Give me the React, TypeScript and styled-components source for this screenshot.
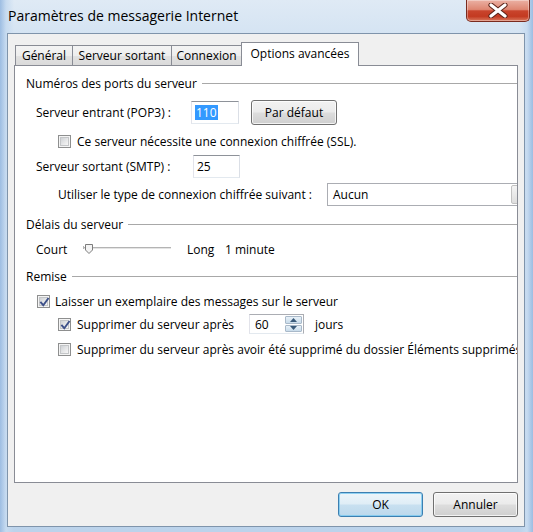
import React from "react";
import styled, { createGlobalStyle } from "styled-components";

const Global = createGlobalStyle`
  html, body { margin: 0; padding: 0; }
  body {
    width: 533px; height: 532px; overflow: hidden;
    font-family: "Open Sans", "Noto Sans", sans-serif;
    font-size: 12px; color: #000;
  }
`;

const Window = styled.div`
  width: 533px; height: 532px; box-sizing: border-box;
  display: flex; flex-direction: column;
  background:
    linear-gradient(90deg, #9dbde2 0px, #c7dbf0 6px, rgba(200,220,240,0) 14px, rgba(200,220,240,0) 519px, #c7dbf0 527px, #9dbde2 533px),
    linear-gradient(180deg, #dfeaf5 0%, #d2e2f2 8%, #c3d7ed 40%, #bcd3eb 100%);
`;

const TitleBar = styled.div`
  height: 33px; flex: none;
  display: flex; justify-content: space-between; align-items: flex-start;
  padding-left: 8px; padding-right: 3px;
`;

const Title = styled.div`
  font-size: 14px; line-height: 20px; margin-top: 6px;
  color: #000;
`;

const CloseButton = styled.div`
  width: 64px; height: 22px; box-sizing: border-box;
  border: 1px solid #7a2b1f; border-top: none;
  border-radius: 0 0 5px 5px;
  background: linear-gradient(180deg, #ebb1a4 0%, #de8672 45%, #c9442c 52%, #c33a21 78%, #d9785d 100%);
  box-shadow: inset 0 0 0 1px rgba(255,255,255,0.35);
  display: flex; align-items: center; justify-content: center;
`;

const Client = styled.div`
  flex: 1;
  margin: 0 8px 5px 7px;
  border: 1px solid #7f94ab;
  background: #f0f0f0;
  padding: 8px 6px 9px 6px;
  display: flex; flex-direction: column;
  min-height: 0;
`;

const TabStrip = styled.div`
  height: 23px; flex: none;
  display: flex; align-items: flex-end;
  padding-left: 1px;
`;

const Tab = styled.div<{ $w: number; $active?: boolean; $first?: boolean }>`
  width: ${(p) => p.$w}px; box-sizing: border-box;
  height: ${(p) => (p.$active ? 24 : 20)}px;
  margin-left: ${(p) => (p.$first ? 0 : -1)}px;
  margin-bottom: ${(p) => (p.$active ? -1 : 0)}px;
  border: 1px solid #898c95; border-bottom: none;
  background: ${(p) =>
    p.$active ? "#ffffff" : "linear-gradient(180deg, #f4f4f4 0%, #eeeeee 50%, #e2e2e2 51%, #dadada 100%)"};
  position: relative; z-index: ${(p) => (p.$active ? 2 : 1)};
  display: flex; align-items: center; justify-content: center;
  padding-bottom: ${(p) => (p.$active ? 3 : 0)}px;
  font-size: 12px; white-space: nowrap;
`;

const Panel = styled.div`
  flex: 1; min-height: 0;
  background: #fff;
  border: 1px solid #898c95;
  padding: 9px 0 0 11px;
  overflow: hidden;
  display: flex; flex-direction: column;
`;

const GroupHeader = styled.div<{ $mt: number }>`
  height: 16px; margin-top: ${(p) => p.$mt}px;
  display: flex; align-items: center; gap: 5px;
  white-space: nowrap; flex: none;
`;

const GroupLine = styled.div`
  flex: 1; height: 1px; background: #a8a8a8;
`;

const Row = styled.div<{ $mt: number; $h: number; $indent: number }>`
  height: ${(p) => p.$h}px; margin-top: ${(p) => p.$mt}px;
  padding-left: ${(p) => p.$indent}px;
  display: flex; align-items: center;
  white-space: nowrap; flex: none;
`;

const Label = styled.span<{ $w?: number }>`
  display: inline-block; flex: none;
  ${(p) => (p.$w ? `width: ${p.$w}px;` : "")}
`;

const TextBox = styled.div<{ $w: number }>`
  width: ${(p) => p.$w}px; height: 23px; box-sizing: border-box; flex: none;
  border: 1px solid #abadb3; border-top-color: #8e9299;
  border-left-color: #e2e3ea; border-right-color: #dbdfe6; border-bottom-color: #e3e9ef;
  background: #fff;
  display: flex; align-items: center; padding-left: 3px;
`;

const Selected = styled.span`
  background: #3399ff; color: #fff; padding: 0 1px; line-height: 15px;
`;

const PushButton = styled.div<{ $w: number; $default?: boolean }>`
  width: ${(p) => p.$w}px; height: 25px; box-sizing: border-box; flex: none;
  border: 1px solid ${(p) => (p.$default ? "#3c7fb1" : "#707070")};
  border-radius: 3px;
  background: ${(p) =>
    p.$default
      ? "linear-gradient(180deg, #edf5fa 0%, #dfedf6 48%, #c8e0f0 52%, #bcd8ec 100%)"
      : "linear-gradient(180deg, #f2f2f2 0%, #ebebeb 48%, #dddddd 52%, #cfcfcf 100%)"};
  box-shadow: inset 0 0 0 1px ${(p) => (p.$default ? "rgba(120,200,240,0.8)" : "rgba(255,255,255,0.75)")};
  display: flex; align-items: center; justify-content: center;
  font-size: 12px;
`;

const Spacer = styled.span<{ $w: number }>`
  display: inline-block; width: ${(p) => p.$w}px; flex: none;
`;

const Select = styled.div`
  width: 203px; height: 23px; box-sizing: border-box; flex: none;
  border: 1px solid #abadb3; background: #fff;
  display: flex; align-items: center; justify-content: space-between;
  padding-left: 5px; padding-right: 1px;
`;

const DropButton = styled.div`
  width: 17px; height: 19px; box-sizing: border-box;
  border: 1px solid #c2c2c2; border-radius: 2px;
  background: linear-gradient(180deg, #f4f4f4, #dedede);
`;

const CheckBoxBox = styled.span`
  width: 13px; height: 13px; box-sizing: border-box; flex: none;
  border: 1px solid #8e8f8f; background: #f4f4f4;
  display: inline-flex; align-items: center; justify-content: center;
  position: relative;
`;

const CheckInner = styled.span`
  width: 9px; height: 9px; box-sizing: border-box;
  border: 1px solid #c4c6c8;
  background: linear-gradient(135deg, #cfd2d6 0%, #e6e7e8 55%, #f6f6f6 100%);
`;

const CheckMark = styled.svg`
  position: absolute; left: 0; top: 0;
`;

const CheckGap = styled.span<{ $w: number }>`
  display: inline-block; width: ${(p) => p.$w}px; flex: none;
`;

const Spinner = styled.div`
  width: 55px; height: 20px; box-sizing: border-box; flex: none;
  border: 1px solid #abadb3; border-left-color: #e2e3ea; border-bottom-color: #e3e9ef;
  background: #fff;
  display: flex; align-items: center; justify-content: space-between;
  padding-left: 5px; padding-right: 1px;
`;

const SpinButtons = styled.div`
  width: 17px; height: 16px;
  display: flex; flex-direction: column; gap: 1px;
`;

const SpinHalf = styled.div`
  flex: 1; box-sizing: border-box;
  border: 1px solid #a9b9c9; border-radius: 1px;
  background: linear-gradient(180deg, #e8f1f8, #c8dbea);
  display: flex; align-items: center; justify-content: center;
`;

const ButtonRow = styled.div`
  flex: none; height: 25px; margin-top: 9px;
  display: flex; justify-content: flex-end; gap: 10px;
`;

function CheckBox({ checked }: { checked?: boolean }) {
  return (
    <CheckBoxBox>
      <CheckInner />
      {checked && (
        <CheckMark width="13" height="13" viewBox="0 0 13 13">
          <path d="M3 6.5 L5.3 9.2 L10 2.8" fill="none" stroke="#3d5089" strokeWidth="1.9" strokeLinecap="square" />
        </CheckMark>
      )}
    </CheckBoxBox>
  );
}

function Slider() {
  return (
    <svg width="90" height="12" viewBox="0 0 90 12" style={{ flex: "none" }}>
      <rect x="0" y="4" width="88" height="1" fill="#b4b4b4" />
      <rect x="0" y="5" width="88" height="1" fill="#e4e4e4" />
      <rect x="0" y="3" width="1" height="3" fill="#b4b4b4" />
      <path d="M2.5 1.5 H9.5 V7 L6 10.5 L2.5 7 Z" fill="#f4f4f4" stroke="#7c7c7c" strokeWidth="1" />
    </svg>
  );
}

export default function App() {
  return (
    <>
      <Global />
      <Window>
        <TitleBar>
          <Title>Paramètres de messagerie Internet</Title>
          <CloseButton>
            <svg width="20" height="15" viewBox="0 0 20 15">
              <path d="M3 2 L17 13 M17 2 L3 13" stroke="#5a2218" strokeWidth="5.2" strokeLinecap="round" />
              <path d="M3 2 L17 13 M17 2 L3 13" stroke="#ffffff" strokeWidth="3.2" strokeLinecap="round" />
            </svg>
          </CloseButton>
        </TitleBar>
        <Client>
          <TabStrip>
            <Tab $w={58} $first>Général</Tab>
            <Tab $w={100}>Serveur sortant</Tab>
            <Tab $w={71}>Connexion</Tab>
            <Tab $w={118} $active>Options avancées</Tab>
          </TabStrip>
          <Panel>
            <GroupHeader $mt={0}>
              <span>Numéros des ports du serveur</span>
              <GroupLine />
            </GroupHeader>
            <Row $mt={9} $h={25} $indent={10}>
              <Label $w={155}>Serveur entrant (POP3) :</Label>
              <TextBox $w={48}><Selected>110</Selected></TextBox>
              <Spacer $w={12} />
              <PushButton $w={86}>Par défaut</PushButton>
            </Row>
            <Row $mt={8} $h={16} $indent={32}>
              <CheckBox />
              <CheckGap $w={6} />
              <Label>Ce serveur nécessite une connexion chiffrée (SSL).</Label>
            </Row>
            <Row $mt={6} $h={23} $indent={10}>
              <Label $w={157}>Serveur sortant (SMTP) :</Label>
              <TextBox $w={47}>25</TextBox>
            </Row>
            <Row $mt={5} $h={23} $indent={32}>
              <Label $w={269}>Utiliser le type de connexion chiffrée suivant :</Label>
              <Select>
                <span>Aucun</span>
                <DropButton />
              </Select>
            </Row>
            <GroupHeader $mt={10}>
              <span>Délais du serveur</span>
              <GroupLine />
            </GroupHeader>
            <Row $mt={9} $h={16} $indent={10}>
              <Label $w={47}>Court</Label>
              <Slider />
              <Spacer $w={14} />
              <Label $w={38}>Long</Label>
              <Label>1 minute</Label>
            </Row>
            <GroupHeader $mt={11}>
              <span>Remise</span>
              <GroupLine />
            </GroupHeader>
            <Row $mt={9} $h={16} $indent={11}>
              <CheckBox checked />
              <CheckGap $w={5} />
              <Label>Laisser un exemplaire des messages sur le serveur</Label>
            </Row>
            <Row $mt={5} $h={20} $indent={32}>
              <CheckBox checked />
              <CheckGap $w={6} />
              <Label $w={172}>Supprimer du serveur après</Label>
              <Spinner>
                <span>60</span>
                <SpinButtons>
                  <SpinHalf>
                    <svg width="7" height="4" viewBox="0 0 7 4"><path d="M0 4 L3.5 0 L7 4 Z" fill="#3a5a7a" /></svg>
                  </SpinHalf>
                  <SpinHalf>
                    <svg width="7" height="4" viewBox="0 0 7 4"><path d="M0 0 L3.5 4 L7 0 Z" fill="#3a5a7a" /></svg>
                  </SpinHalf>
                </SpinButtons>
              </Spinner>
              <Spacer $w={11} />
              <Label>jours</Label>
            </Row>
            <Row $mt={7} $h={16} $indent={32}>
              <CheckBox />
              <CheckGap $w={6} />
              <Label>Supprimer du serveur après avoir été supprimé du dossier Éléments supprimés</Label>
            </Row>
          </Panel>
          <ButtonRow>
            <PushButton $w={85} $default>OK</PushButton>
            <PushButton $w={85}>Annuler</PushButton>
          </ButtonRow>
        </Client>
      </Window>
    </>
  );
}
